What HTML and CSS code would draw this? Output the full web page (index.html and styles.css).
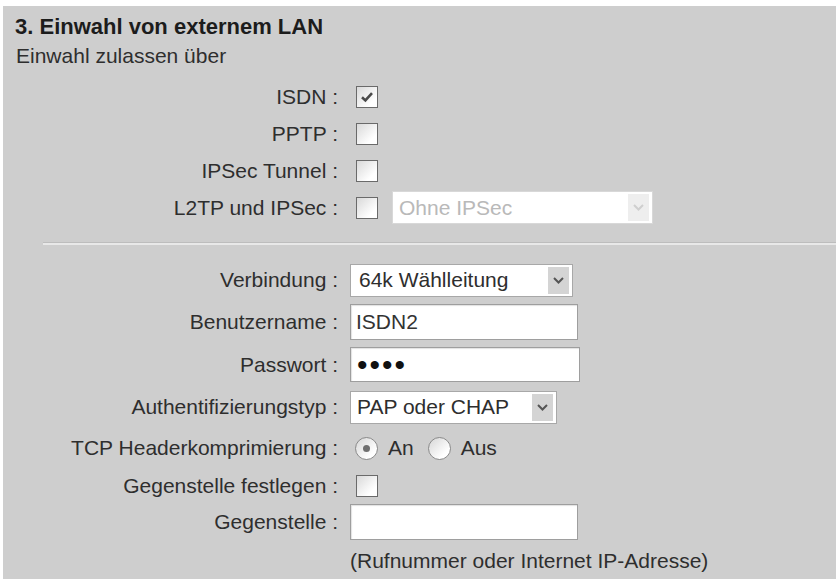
FILE: index.html
```html
<!DOCTYPE html>
<html lang="de">
<head>
    <meta charset="UTF-8">
    <meta name="viewport" content="width=device-width, initial-scale=1.0">
    <title>Einwahl von externem LAN</title>
    <link rel="stylesheet" href="styles.css">
</head>
<body>
    <div class="panel">
        <h1 class="title">3. Einwahl von externem LAN</h1>
        <p class="intro">Einwahl zulassen über</p>

        <div class="form form-top">
            <span class="lbl">ISDN :</span>
            <div class="ctl">
                <span class="check">
                    <svg width="14" height="14" viewBox="0 0 14 14"><path d="M2 7.2 L5.4 10.4 L12 3.2" fill="none" stroke="#4a4a4a" stroke-width="2.6"/></svg>
                </span>
            </div>

            <span class="lbl">PPTP :</span>
            <div class="ctl"><span class="check"></span></div>

            <span class="lbl">IPSec Tunnel :</span>
            <div class="ctl"><span class="check"></span></div>

            <span class="lbl">L2TP und IPSec :</span>
            <div class="ctl">
                <span class="check"></span>
                <div class="select select-ipsec disabled">
                    <span class="value">Ohne IPSec</span>
                    <span class="arrow"><svg width="11" height="7" viewBox="0 0 11 7"><path d="M1 1 L5.5 5.5 L10 1" fill="none" stroke="#cfcfcf" stroke-width="2"/></svg></span>
                </div>
            </div>
        </div>

        <hr class="sep">

        <div class="form form-bottom">
            <span class="lbl">Verbindung :</span>
            <div class="ctl">
                <div class="select select-conn">
                    <span class="value">64k Wählleitung</span>
                    <span class="arrow"><svg width="11" height="7" viewBox="0 0 11 7"><path d="M1 1 L5.5 5.5 L10 1" fill="none" stroke="#555" stroke-width="2"/></svg></span>
                </div>
            </div>

            <span class="lbl">Benutzername :</span>
            <div class="ctl"><input class="text text-user" type="text" value="ISDN2"></div>

            <span class="lbl">Passwort :</span>
            <div class="ctl"><input class="text text-pass" type="password" value="abcd"></div>

            <span class="lbl">Authentifizierungstyp :</span>
            <div class="ctl">
                <div class="select select-auth">
                    <span class="value">PAP oder CHAP</span>
                    <span class="arrow"><svg width="11" height="7" viewBox="0 0 11 7"><path d="M1 1 L5.5 5.5 L10 1" fill="none" stroke="#555" stroke-width="2"/></svg></span>
                </div>
            </div>

            <span class="lbl">TCP Headerkomprimierung :</span>
            <div class="ctl">
                <span class="radio on"></span><span class="opt">An</span>
                <span class="radio"></span><span class="opt">Aus</span>
            </div>

            <span class="lbl">Gegenstelle festlegen :</span>
            <div class="ctl"><span class="check"></span></div>

            <span class="lbl">Gegenstelle :</span>
            <div class="ctl"><input class="text text-peer" type="text" value=""></div>

            <span class="lbl"></span>
            <div class="ctl hint">(Rufnummer oder Internet IP-Adresse)</div>
        </div>
    </div>
</body>
</html>
```

FILE: styles.css
```css
body {
    margin: 0;
    background: #fff;
    font-family: "Liberation Sans", Arial, sans-serif;
    color: #2e2e2e;
}

.panel {
    margin: 6px 1px 0 3px;
    padding-top: 8px;
    min-height: 573px;
    box-sizing: border-box;
    background: #cecece;
}

.title {
    margin: 0 0 3px 12px;
    font-size: 22px;
    line-height: 26px;
    font-weight: bold;
    color: #1c1c1c;
}

.intro {
    margin: 0 0 9px 13px;
    font-size: 21px;
    line-height: 26px;
}

.form {
    display: grid;
    grid-template-columns: 335px 1fr;
    column-gap: 12px;
    align-items: center;
}

.form-top {
    grid-auto-rows: 37px;
}

.form-bottom {
    grid-template-rows: 42px 42px 43px 42px 40px 36px 36px 42px;
}

.sep {
    height: 0;
    margin: 16px 0 14px 40px;
    border: none;
    border-top: 1px solid #bdbdbd;
    border-bottom: 2px solid #e8e8e8;
}

.lbl {
    text-align: right;
    font-size: 21px;
    white-space: nowrap;
}

.ctl {
    display: flex;
    align-items: center;
    font-size: 21px;
}

/* checkboxes and radios, old windows look */
.check {
    width: 22px;
    height: 22px;
    margin-left: 6px;
    box-sizing: border-box;
    border: 1px solid #6a6a6a;
    background: linear-gradient(135deg, #d9d9d9, #ffffff 75%);
    display: flex;
    align-items: center;
    justify-content: center;
}

.radio {
    width: 23px;
    height: 23px;
    box-sizing: border-box;
    border-radius: 50%;
    border: 1px solid #8a8a8a;
    background: linear-gradient(135deg, #d6d6d6, #ffffff 75%);
    display: flex;
    align-items: center;
    justify-content: center;
    margin-left: 5px;
}

.radio.on::after {
    content: "";
    width: 7px;
    height: 7px;
    border-radius: 50%;
    background: #6f6f6f;
}

.opt {
    margin-left: 10px;
}

.opt + .radio {
    margin-left: 14px;
}

/* selects */
.select {
    position: relative;
    height: 33px;
    box-sizing: border-box;
    border: 1px solid #a8a8a8;
    background: #fff;
    display: flex;
    align-items: center;
    padding-left: 8px;
}

.select-conn {
    width: 223px;
}

.select-auth {
    width: 207px;
    padding-left: 6px;
}

.select-ipsec {
    width: 261px;
    margin-left: 14px;
    padding-left: 6px;
}

.select.disabled {
    border-color: #d8d8d8;
    color: #b9b9b9;
}

.arrow {
    position: absolute;
    right: 3px;
    top: 2px;
    bottom: 2px;
    width: 21px;
    background: #d4d4d4;
    display: flex;
    align-items: center;
    justify-content: center;
}

.select.disabled .arrow {
    background: #eeeeee;
}

/* text inputs */
.text {
    height: 36px;
    width: 228px;
    box-sizing: border-box;
    border: 1px solid #9e9e9e;
    box-shadow: inset 1px 1px 1px rgba(0, 0, 0, 0.12);
    background: #fff;
    padding: 0 6px;
    font-family: "Liberation Sans", Arial, sans-serif;
    font-size: 21px;
    color: #333;
    outline: none;
}

.text-user {
    padding-left: 5px;
}

.text-pass {
    width: 230px;
    height: 35px;
    font-size: 30px;
    letter-spacing: 2px;
    color: #111;
}

.hint {
    font-size: 21px;
}
```
